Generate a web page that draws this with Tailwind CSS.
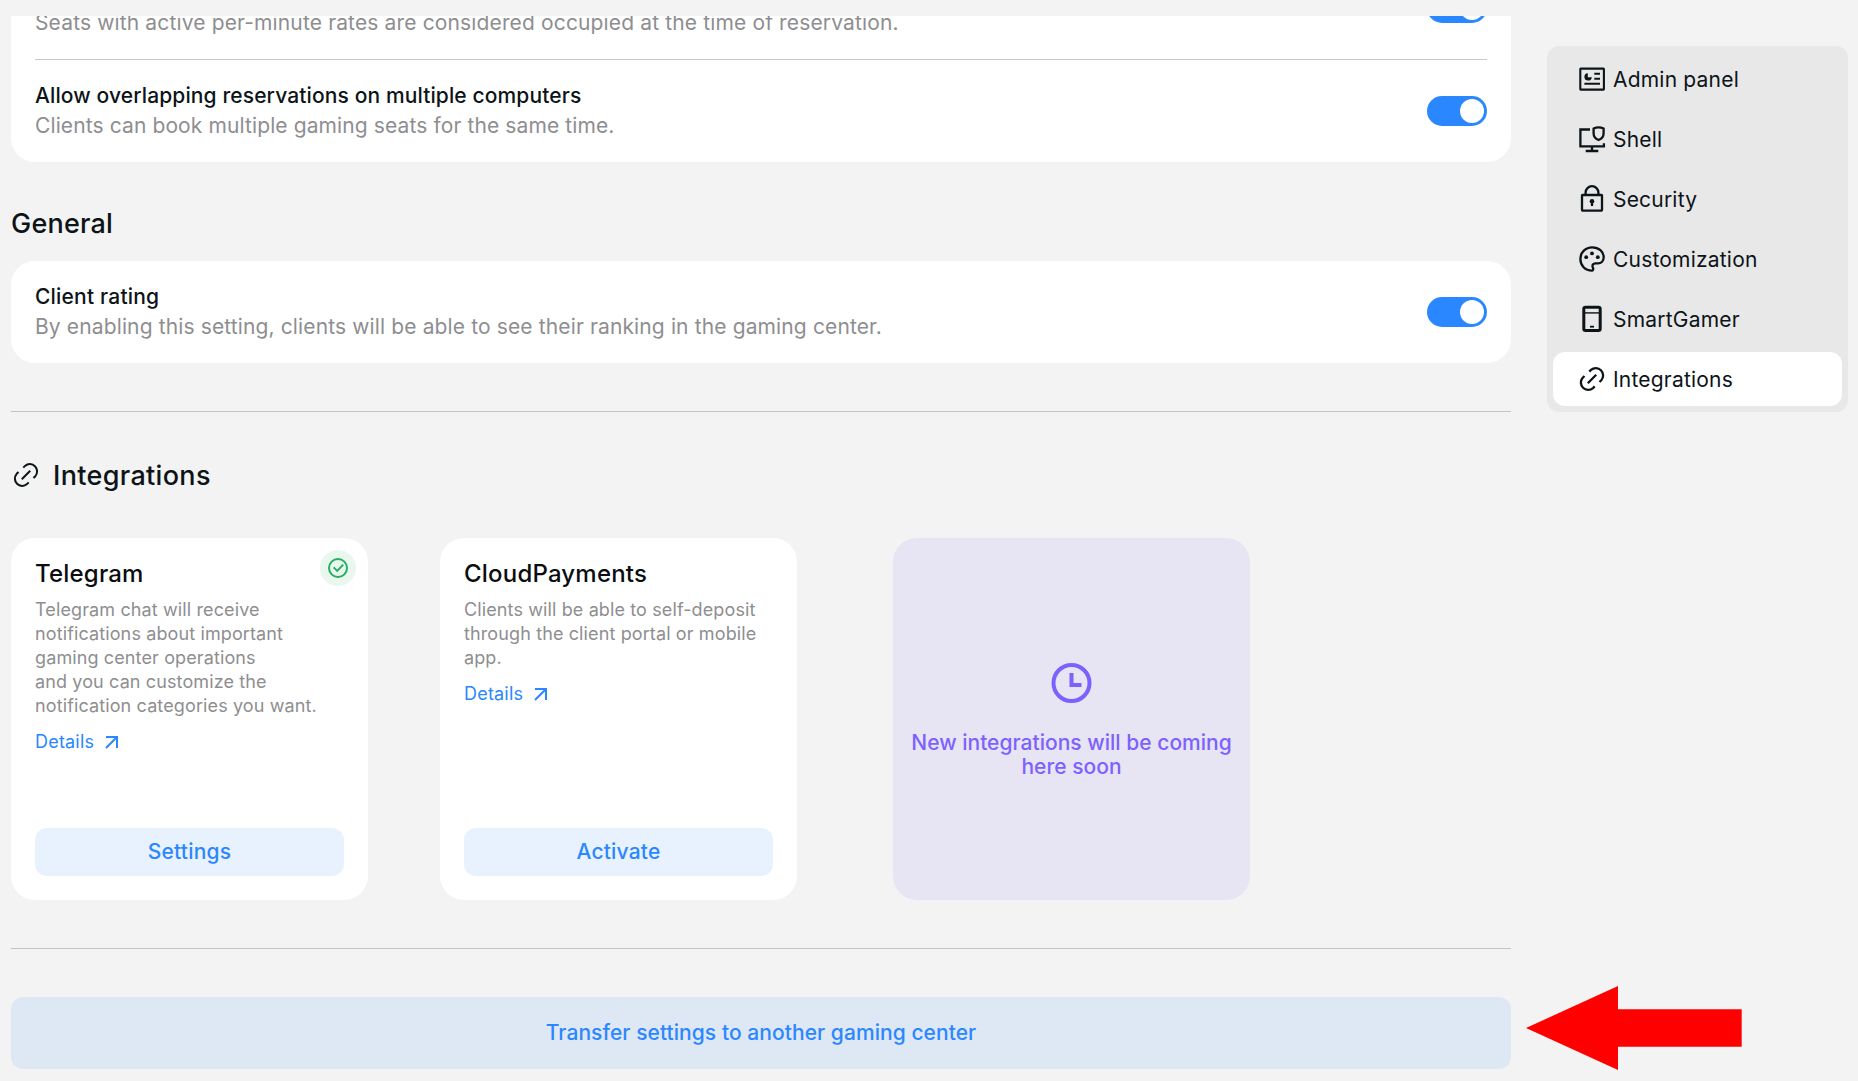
<!DOCTYPE html>
<html lang="en">

<head>
    <meta charset="UTF-8">
    <meta name="viewport" content="width=device-width, initial-scale=1.0">
    <title>Gaming Center Settings</title>
    <script src="https://cdn.jsdelivr.net/npm/@tailwindcss/browser@4"></script>
</head>

<body class="relative flex h-[1081px] w-[1858px] items-start overflow-hidden bg-[#f3f3f3] pl-[11px] pt-4 font-['Inter',sans-serif] text-[21px] text-[#0d1418]">

    <!-- settings -->
    <main class="h-[1065px] w-[1500px] overflow-hidden">
        <section class="rounded-b-3xl bg-white px-6">
            <div class="-mt-[38px] flex h-[60px] items-center justify-between">
                <p class="self-end leading-[30px] tracking-[0.14px] text-[#8e8e91]">Seats with active per-minute rates are considered occupied at the time of reservation.</p>
                <div class="flex h-[30px] w-[60px] justify-end rounded-full bg-[#2b87ff] p-[3px]">
                    <div class="size-6 rounded-full bg-white"></div>
                </div>
            </div>
            <hr class="mt-[21px] border-[#c8c9ca]">
            <div class="flex items-center justify-between py-[21px]">
                <div class="leading-[30px]">
                    <h3 class="font-medium tracking-[0.12px]">Allow overlapping reservations on multiple computers</h3>
                    <p class="tracking-[0.11px] text-[#8e8e91]">Clients can book multiple gaming seats for the same time.</p>
                </div>
                <div class="flex h-[30px] w-[60px] justify-end rounded-full bg-[#2b87ff] p-[3px]">
                    <div class="size-6 rounded-full bg-white"></div>
                </div>
            </div>
        </section>

        <h2 class="mb-[19px] mt-11 text-[27px] font-medium leading-9 tracking-[0.2px]">General</h2>
        <section class="flex items-center justify-between rounded-3xl bg-white px-6 py-[21px]">
            <div class="leading-[30px]">
                <h3 class="font-medium tracking-[0.2px]">Client rating</h3>
                <p class="tracking-[0.13px] text-[#8e8e91]">By enabling this setting, clients will be able to see their ranking in the gaming center.</p>
            </div>
            <div class="flex h-[30px] w-[60px] justify-end rounded-full bg-[#2b87ff] p-[3px]">
                <div class="size-6 rounded-full bg-white"></div>
            </div>
        </section>

        <hr class="mt-12 border-[#c2c3c4]">

        <div class="my-[45px] flex h-9 items-center gap-3">
            <svg class="size-[30px]" viewBox="0 0 30 30" fill="none" stroke="currentColor" stroke-width="2">
                <path d="M12.3 7.6 14 5.9A7.3 7.3 0 0 1 24.3 16.2L22.5 18M17.7 22.4 16 24.1A7.3 7.3 0 0 1 5.7 13.8L7.5 12M10.8 19.2l8.4-8.4" />
            </svg>
            <h2 class="pt-0.5 text-[27px] font-medium leading-9 tracking-[0.33px]">Integrations</h2>
        </div>

        <!-- integration cards -->
        <div class="flex h-[362px]">
            <article class="relative mr-[72px] flex w-[357px] flex-col rounded-3xl bg-white p-6">
                <h3 class="text-2xl font-medium leading-6 tracking-[0.2px] text-[#0b0d10]">Telegram</h3>
                <p class="mt-3 text-lg leading-6 tracking-[0.12px] text-[#8e8e91]">Telegram chat will receive<br>notifications about important<br>gaming center operations<br>and you can customize the<br>notification categories you want.</p>
                <a class="mt-3 flex items-center gap-[11px] text-lg leading-6 tracking-[0.2px] text-[#2b87ff]">Details
                    <svg class="size-[14px]" viewBox="0 0 14 14" fill="none" stroke="currentColor" stroke-width="2">
                        <path d="M1 2h11v11M12 2 1 13" />
                    </svg>
                </a>
                <button class="mt-auto h-12 rounded-xl bg-[#e8f2ff] font-medium tracking-[0.2px] text-[#2b87ff]">Settings</button>
                <svg class="absolute right-3 top-3 size-9" viewBox="0 0 36 36" fill="none" stroke="#27ae60" stroke-width="2">
                    <circle cx="18" cy="18" r="18" fill="#e9f7ef" stroke="none" />
                    <circle cx="18" cy="18" r="9" />
                    <path d="m13.7 17.4 3.5 3.5 6-6.3" />
                </svg>
            </article>

            <article class="mr-24 flex w-[357px] flex-col rounded-3xl bg-white p-6">
                <h3 class="text-2xl font-medium leading-6 tracking-[0.2px] text-[#0b0d10]">CloudPayments</h3>
                <p class="mt-3 text-lg leading-6 tracking-[0.12px] text-[#8e8e91]">Clients will be able to self-deposit<br>through the client portal or mobile<br>app.</p>
                <a class="mt-3 flex items-center gap-[11px] text-lg leading-6 tracking-[0.2px] text-[#2b87ff]">Details
                    <svg class="size-[14px]" viewBox="0 0 14 14" fill="none" stroke="currentColor" stroke-width="2">
                        <path d="M1 2h11v11M12 2 1 13" />
                    </svg>
                </a>
                <button class="mt-auto h-12 rounded-xl bg-[#e8f2ff] font-medium tracking-[0.2px] text-[#2b87ff]">Activate</button>
            </article>

            <article class="flex w-[357px] flex-col items-center justify-center gap-6 rounded-3xl bg-[#e7e4f3] px-4 text-[#7d61ff]">
                <svg class="size-12" viewBox="0 0 48 48" fill="none" stroke="currentColor" stroke-width="4">
                    <circle cx="23.5" cy="24" r="18" />
                    <path d="M23.5 14v12h10" />
                </svg>
                <p class="text-center font-medium leading-6 tracking-[0.02px]">New integrations will be coming<br>here soon</p>
            </article>
        </div>

        <hr class="mt-12 border-[#c2c3c4]">

        <button class="mt-12 h-[72px] w-full rounded-xl bg-[#dee8f4] font-medium tracking-[0.06px] text-[#2b87ff]">Transfer settings to another gaming center</button>
    </main>

    <!-- section menu -->
    <nav class="ml-9 mt-[30px] flex w-[301px] flex-col gap-1.5 rounded-xl bg-[#e8e8e8] p-1.5 tracking-[0.2px] *:flex *:h-[54px] *:items-center *:gap-1.5 *:rounded-xl *:pl-6 [&_span]:pt-0.5">
        <a>
            <svg class="size-[30px]" viewBox="0 0 30 30" fill="none" stroke="currentColor" stroke-width="2.1">
                <rect x="3.3" y="4.6" width="23.6" height="21" rx=".5" />
                <path d="M17.3 9.8H23M17.3 14.7H23M7.4 19.8H23" />
                <path d="M10.8 9.2v4h4a3.7 3.7 0 1 1-4-4z" fill="currentColor" stroke="none" />
            </svg>
            <span>Admin panel</span>
        </a>
        <a>
            <svg class="size-[30px]" viewBox="0 0 30 30" fill="none" stroke="currentColor" stroke-width="2.3">
                <path d="M13 5.5H3.4v16.8h23.5v-3M15 22.3V27M8.7 27h12.6" />
                <path d="M16.6 4.6Q21.6 2 26.6 4.6V9.3Q26.6 14.3 21.6 16Q16.6 14.3 16.6 9.3Z" />
            </svg>
            <span>Shell</span>
        </a>
        <a>
            <svg class="size-[30px]" viewBox="0 0 30 30" fill="none" stroke="currentColor" stroke-width="2.3">
                <rect x="5" y="11" width="20" height="15.6" rx=".5" />
                <path d="M8.6 11V8.6a6.4 6.4 0 0 1 12.8 0V11M15 17v5" />
                <circle cx="15" cy="17.2" r="2.3" fill="currentColor" stroke="none" />
            </svg>
            <span>Security</span>
        </a>
        <a>
            <svg class="size-[30px]" viewBox="0 0 30 30" fill="none" stroke="currentColor" stroke-width="2.3">
                <path d="M15 26.6C8 26.6 3.4 21.4 3.4 15C3.4 8.4 8.6 3.3 15.2 3.3C21.8 3.3 26.7 7.8 26.7 13.2C26.7 17 24.2 19.3 21 19.3H18.3C16.2 19.3 14.9 21.2 15.8 23.2C16.6 24.8 16.2 26.4 15 26.6Z" />
                <g fill="currentColor" stroke="none">
                    <circle cx="9.2" cy="13.2" r="1.9" />
                    <circle cx="15" cy="9.4" r="1.9" />
                    <circle cx="20.8" cy="13.2" r="1.9" />
                </g>
            </svg>
            <span>Customization</span>
        </a>
        <a>
            <svg class="size-[30px]" viewBox="0 0 30 30" fill="none" stroke="currentColor">
                <rect x="6.8" y="3.2" width="16.4" height="23.4" rx="1.8" stroke-width="3" />
                <path d="M7 8.9h16" stroke-width="1.4" />
                <path d="M13 22.7h4" stroke-width="1.8" />
            </svg>
            <span>SmartGamer</span>
        </a>
        <a class="bg-white">
            <svg class="size-[30px]" viewBox="0 0 30 30" fill="none" stroke="currentColor" stroke-width="2.3">
                <path d="M12.3 7.6 14 5.9A7.3 7.3 0 0 1 24.3 16.2L22.5 18M17.7 22.4 16 24.1A7.3 7.3 0 0 1 5.7 13.8L7.5 12M10.8 19.2l8.4-8.4" />
            </svg>
            <span>Integrations</span>
        </a>
    </nav>

    <!-- pointer to the transfer button -->
    <svg class="absolute left-[1526px] top-[986px] h-[84px] w-[216px]" viewBox="0 0 216 84" fill="#f00">
        <path d="M0 42 92 0v23.3h123.7v37.4H92V84z" />
    </svg>
</body>

</html>
